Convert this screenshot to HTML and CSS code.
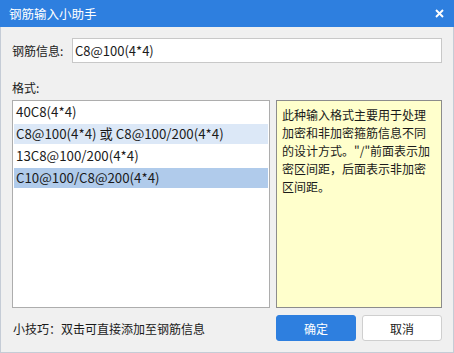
FILE: index.html
```html
<!DOCTYPE html>
<html lang="zh-CN">
<head>
    <meta charset="UTF-8">
    <title>钢筋输入小助手</title>
    <link rel="stylesheet" href="styles.css">
</head>
<body>
    <div class="dialog">
        <div class="titlebar">
            <span class="title">钢筋输入小助手</span>
            <svg class="close" width="9" height="9" viewBox="0 0 9 9">
                <path d="M1 1L8 8M8 1L1 8" stroke="#fff" stroke-width="1.9" fill="none"/>
            </svg>
        </div>

        <div class="content">
            <div class="info-row">
                <label for="rebarInfo">钢筋信息:</label>
                <input type="text" id="rebarInfo" value="C8@100(4*4)">
            </div>

            <div class="format-label">格式:</div>

            <div class="panels">
                <div class="format-list">
                    <div class="item">40C8(4*4)</div>
                    <div class="item hover">C8@100(4*4) 或 C8@100/200(4*4)</div>
                    <div class="item">13C8@100/200(4*4)</div>
                    <div class="item selected">C10@100/C8@200(4*4)</div>
                </div>
                <div class="note">此种输入格式主要用于处理加密和非加密箍筋信息不同的设计方式。"/"前面表示加密区间距，后面表示非加密区间距。</div>
            </div>

            <div class="footer">
                <span class="tip">小技巧：双击可直接添加至钢筋信息</span>
                <div class="button-group">
                    <button class="ok-btn">确定</button>
                    <button class="cancel-btn">取消</button>
                </div>
            </div>
        </div>
    </div>
</body>
</html>
```

FILE: styles.css
```css
body {
    margin: 0;
    font-family: "Noto Sans CJK SC", "Noto Sans", sans-serif;
    font-size: 12px;
    color: #1a1a1a;
}

.dialog {
    width: 454px;
    height: 353px;
    box-sizing: border-box;
    background: #f0f0f0;
    border: 1px solid #c5ccd6;
    border-top: none;
    display: flex;
    flex-direction: column;
}

.titlebar {
    height: 27px;
    margin: 0 -1px;
    padding: 0 10px 0 9px;
    background: #2e7fdf;
    color: #fff;
    display: flex;
    align-items: center;
    justify-content: space-between;
}

.title {
    font-size: 12.5px;
}

.content {
    flex: 1;
    padding: 11px 11px 0 11px;
    display: flex;
    flex-direction: column;
}

.info-row {
    display: flex;
    align-items: center;
}

.info-row label {
    width: 60px;
}

.info-row input {
    flex: 1;
    height: 25px;
    box-sizing: border-box;
    margin: 0;
    padding: 0 2px;
    border: 1px solid #c8c8c8;
    background: #fff;
    font-family: inherit;
    font-size: 13px;
    color: #1a1a1a;
    outline: none;
}

.format-label {
    margin-top: 16px;
    height: 17px;
    line-height: 17px;
    margin-bottom: 4px;
}

.panels {
    display: flex;
    gap: 6px;
    height: 208px;
}

.format-list {
    width: 258px;
    box-sizing: border-box;
    border: 1px solid #adadad;
    background: #fff;
    padding: 1px;
}

.item {
    height: 20px;
    line-height: 20px;
    padding: 0 2px;
    margin-bottom: 2px;
    font-size: 13.3px;
}

.item.hover {
    background: #dce8f7;
}

.item.selected {
    background: #b0cbeb;
}

.note {
    flex: 1;
    box-sizing: border-box;
    border: 1px solid #8c8c8c;
    background: #ffffcc;
    padding: 5px 5px;
    line-height: 18px;
    font-size: 12px;
}

.footer {
    margin-top: 7px;
    display: flex;
    align-items: center;
    justify-content: space-between;
}

.tip {
    padding-left: 1px;
}

.button-group {
    display: flex;
    gap: 6px;
}

.button-group button {
    width: 80px;
    height: 26px;
    border-radius: 3px;
    font-family: inherit;
    font-size: 12px;
    cursor: pointer;
}

.ok-btn {
    background: #2e7fdf;
    border: 1px solid #2e7fdf;
    color: #fff;
}

.cancel-btn {
    background: #fff;
    border: 1px solid #cfcfcf;
    color: #1a1a1a;
}
```
